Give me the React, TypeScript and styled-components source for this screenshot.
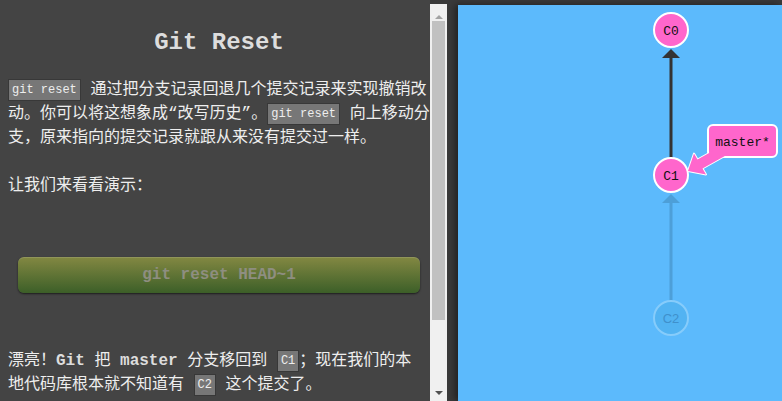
import React from "react";
import styled, { createGlobalStyle } from "styled-components";

const Global = createGlobalStyle`
  html, body { margin: 0; padding: 0; background: #3a3a3a; }
  body { width: 782px; height: 401px; overflow: hidden; }
`;

const Page = styled.div`
  display: flex;
  width: 782px;
  height: 401px;
  background: #3a3a3a;
`;

const Instructions = styled.div`
  width: 430px;
  height: 401px;
  flex: none;
  box-sizing: border-box;
  padding-left: 8px;
  background: #444444;
  overflow: hidden;
  color: #eeeeee;
  font-family: "Liberation Mono", "Noto Sans CJK SC", monospace;
  font-size: 16px;
`;

const Title = styled.h2`
  margin: 29px 0 0;
  height: 28px;
  line-height: 28px;
  text-align: center;
  font-family: "Liberation Mono", monospace;
  font-size: 24px;
  font-weight: bold;
  color: #dddddd;
`;

const Para = styled.p<{ $top: number }>`
  margin: ${(p) => p.$top}px 0 0;
  width: 436px;
  line-height: 24px;
  white-space: nowrap;
`;

const Code = styled.code`
  display: inline-block;
  box-sizing: border-box;
  height: 22px;
  line-height: 20px;
  padding: 0 3px;
  margin: 1px 0 0;
  background: #777777;
  border: 1px solid #383838;
  color: #eeeeee;
  font-family: "Liberation Mono", monospace;
  font-size: 12px;
  vertical-align: top;
`;

const Bold = styled.b`
  font-family: "Liberation Mono", monospace;
  font-weight: bold;
  font-size: 16px;
  color: #dddddd;
`;

const DemoButton = styled.div`
  box-sizing: border-box;
  width: 402px;
  height: 36px;
  margin: 59px 0 0 10px;
  border-radius: 6px;
  background: linear-gradient(#838842, #3c5f28);
  box-shadow: 0 1px 2px rgba(0, 0, 0, 0.6), inset 0 1px 0 rgba(255, 255, 255, 0.12);
  display: flex;
  align-items: center;
  justify-content: center;
  font-family: "Liberation Mono", monospace;
  font-weight: bold;
  font-size: 16px;
  color: #8e8e80;
`;

const Scrollbar = styled.div`
  width: 17px;
  flex: none;
  margin-top: 4px;
  background: #f0f0f0;
  display: flex;
  flex-direction: column;
  align-items: center;
`;

const ArrowUp = styled.div`
  margin-top: 11px;
  width: 0;
  height: 0;
  border-left: 4px solid transparent;
  border-right: 4px solid transparent;
  border-bottom: 4px solid #a3a3a3;
`;

const Thumb = styled.div`
  width: 13px;
  height: 299px;
  margin-top: 2px;
  background: #c1c1c1;
`;

const Spacer = styled.div`
  flex: 1;
`;

const ArrowDown = styled.div`
  margin-bottom: 6px;
  width: 0;
  height: 0;
  border-left: 4px solid transparent;
  border-right: 4px solid transparent;
  border-top: 4px solid #505050;
`;

const Canvas = styled.div`
  flex: 1;
  margin: 5px 0 0 11px;
  background: #5cbafc;
  box-shadow: -3px 0 7px rgba(0, 0, 0, 0.45);
  position: relative;
`;

const Graph = styled.svg`
  display: block;
  width: 100%;
  height: 100%;
`;

const mono = '"Liberation Mono", monospace';

export default function App() {
  return (
    <>
      <Global />
      <Page>
        <Instructions>
          <Title>Git Reset</Title>
          <Para $top={21}>
            <Code>git reset</Code> 通过把分支记录回退几个提交记录来实现撤销改
            <br />
            动。你可以将这想象成“改写历史”。<Code>git reset</Code> 向上移动分
            <br />
            支，原来指向的提交记录就跟从来没有提交过一样。
          </Para>
          <Para $top={24}>让我们来看看演示：</Para>
          <DemoButton>git reset HEAD~1</DemoButton>
          <Para $top={56}>
            漂亮！<Bold>Git</Bold> 把 <Bold>master</Bold> 分支移回到 <Code>C1</Code>；现在我们的本
            <br />
            地代码库根本就不知道有 <Code>C2</Code> 这个提交了。
          </Para>
        </Instructions>
        <Scrollbar>
          <ArrowUp />
          <Thumb />
          <Spacer />
          <ArrowDown />
        </Scrollbar>
        <Canvas>
          <Graph viewBox="0 0 324 396">
            <line x1="213" y1="296" x2="213" y2="197" stroke="#4d9fd8" strokeWidth="3" />
            <polygon points="213,189 204,198 222,198" fill="#4d9fd8" />
            <line x1="213" y1="153" x2="213" y2="52" stroke="#333333" strokeWidth="3" />
            <polygon points="213,44 204,53 222,53" fill="#333333" />
            <circle cx="213" cy="25" r="17" fill="#ff66cc" stroke="#ffffff" strokeWidth="2" />
            <text x="213" y="29.5" textAnchor="middle" fontFamily={mono} fontSize="13" fill="#111">C0</text>
            <circle cx="213" cy="170" r="17" fill="#ff66cc" stroke="#ffffff" strokeWidth="2" />
            <text x="213" y="174.5" textAnchor="middle" fontFamily={mono} fontSize="13" fill="#111">C1</text>
            <circle cx="213" cy="313" r="17" fill="#52b3f2" stroke="#86ccfb" strokeWidth="2" />
            <text x="213" y="317.5" textAnchor="middle" fontFamily='"Liberation Sans", sans-serif' fontSize="13" fill="#3f90cc">C2</text>
            <polygon
              points="230,166 236,148.6 239.5,154.6 264.5,140.6 269.5,149.4 244.5,163.4 248,169.5"
              fill="#ff66cc"
              stroke="#ffffff"
              strokeWidth="2"
              strokeLinejoin="round"
            />
            <rect x="250" y="120" width="69" height="32" rx="5" fill="#ff66cc" stroke="#ffffff" strokeWidth="2" />
            <polygon
              points="230,166 236,148.6 239.5,154.6 264.5,140.6 269.5,149.4 244.5,163.4 248,169.5"
              fill="#ff66cc"
            />
            <text x="284.5" y="140.5" textAnchor="middle" fontFamily={mono} fontSize="13" fill="#111">master*</text>
          </Graph>
        </Canvas>
      </Page>
    </>
  );
}
